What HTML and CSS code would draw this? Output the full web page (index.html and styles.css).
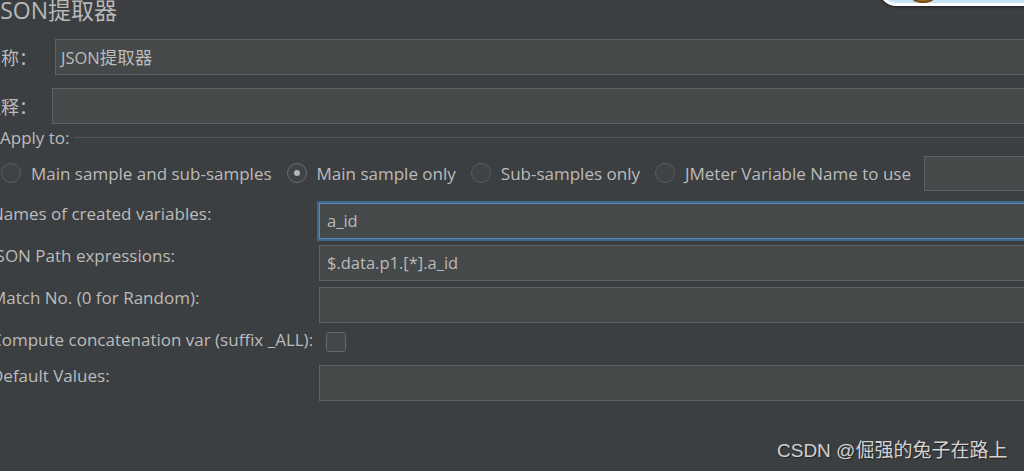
FILE: index.html
```html
<!DOCTYPE html>
<html lang="zh">
<head>
<meta charset="utf-8">
<title>JSON提取器</title>
<link rel="stylesheet" href="styles.css">
</head>
<body>
<div class="page">
  <div class="title">JSON提取器</div>
  <div class="row row-name">
    <span class="lbl lbl-name">名称：</span>
    <div class="field name-field">JSON<span class="cjk">提取器</span></div>
  </div>
  <div class="row row-comment">
    <span class="lbl lbl-comment">注释：</span>
    <div class="field"></div>
  </div>
  <div class="apply">
    <span>Apply to:</span>
    <span class="sep"></span>
  </div>
  <div class="radios">
    <div class="radio"><span class="circle"></span><span>Main sample and sub-samples</span></div>
    <div class="radio"><span class="circle checked"></span><span>Main sample only</span></div>
    <div class="radio"><span class="circle"></span><span>Sub-samples only</span></div>
    <div class="radio"><span class="circle"></span><span>JMeter Variable Name to use</span></div>
    <div class="field var-field"></div>
  </div>
  <div class="grid">
    <span class="glabel">Names of created variables:</span>
    <div class="field focused">a_id</div>
    <span class="glabel">JSON Path expressions:</span>
    <div class="field">$.data.p1.[*].a_id</div>
    <span class="glabel">Match No. (0 for Random):</span>
    <div class="field"></div>
    <span class="glabel">Compute concatenation var (suffix _ALL):</span>
    <div class="checkrow"><span class="checkbox"></span></div>
    <span class="glabel">Default Values:</span>
    <div class="field"></div>
  </div>
</div>
<div class="deco"><span class="blob"></span></div>
<div class="watermark">CSDN @倔强的兔子在路上</div>
</body>
</html>
```
FILE: styles.css
```css
html, body {
  margin: 0;
  padding: 0;
}
body {
  background: #3c3f41;
  width: 1024px;
  height: 471px;
  overflow: hidden;
  position: relative;
  font-family: "Open Sans", "Noto Sans CJK SC", sans-serif;
  color: #bbbbbb;
}
.page {
  width: 1120px;
}
.title {
  font-size: 23px;
  line-height: 28px;
  height: 28px;
  margin: -4px 0 0 -6px;
  color: #b8b8b8;
}
.row {
  display: flex;
  align-items: center;
  height: 36px;
}
.row-name {
  margin-top: 15px;
}
.row-comment {
  margin-top: 13px;
}
.lbl {
  font-family: "Noto Sans CJK TC", "Noto Sans CJK SC", sans-serif;
  font-size: 18px;
  flex: none;
  margin-left: -17px;
}
.lbl-name {
  width: 72px;
}
.lbl-comment {
  width: 69px;
}
.field {
  flex: 1;
  height: 36px;
  box-sizing: border-box;
  background: #45494a;
  border: 1px solid #5f6263;
  font-size: 16.5px;
  line-height: 34px;
  padding: 0 7px;
  white-space: nowrap;
}
.name-field {
  padding-left: 5px;
}
.cjk {
  font-size: 17.5px;
}
.apply {
  display: flex;
  align-items: center;
  height: 22px;
  margin-top: 2px;
  font-size: 17px;
}
.sep {
  flex: 1;
  height: 1px;
  background: #54585a;
  margin-left: 4px;
}
.radios {
  display: flex;
  align-items: center;
  height: 36px;
  margin-top: 7px;
}
.radio {
  display: flex;
  align-items: center;
  margin-right: 14px;
  font-size: 17px;
  white-space: nowrap;
}
.circle {
  width: 20px;
  height: 20px;
  box-sizing: border-box;
  border: 1px solid #5c5f61;
  border-radius: 50%;
  margin: 0 10px 0 1px;
  background: #3f4345;
  position: relative;
}
.circle.checked {
  border-color: #6b6e70;
}
.circle.checked::after {
  content: "";
  position: absolute;
  left: 6px;
  top: 6px;
  width: 6px;
  height: 6px;
  border-radius: 50%;
  background: #b5b5b5;
}
.var-field {
  margin-left: -1px;
  height: 35px;
}
.grid {
  display: grid;
  grid-template-columns: 328px 1fr;
  row-gap: 6px;
  margin-left: -9px;
  margin-top: 12px;
}
.glabel {
  font-size: 17px;
  line-height: 22px;
  align-self: start;
  white-space: nowrap;
}
.focused {
  border-color: #5b87b5;
  box-shadow: 0 0 0 2px #3d6690;
}
.checkrow {
  height: 30px;
}
.checkbox {
  display: block;
  width: 20px;
  height: 20px;
  box-sizing: border-box;
  border: 1px solid #66696b;
  border-radius: 3px;
  background: #43474a;
  margin: 3px 0 0 7px;
}
.deco {
  position: absolute;
  left: 879px;
  top: -28px;
  width: 200px;
  height: 28px;
  background: #c8e3f6;
  border: 3px solid #ffffff;
  border-radius: 20px;
  box-shadow: 0 1px 3px rgba(0, 0, 0, 0.55);
}
.blob {
  position: absolute;
  left: 30px;
  top: 18px;
  width: 22px;
  height: 10px;
  border-radius: 50%;
  background: #b8801f;
  box-shadow: inset 0 -2px 2px #6b4310;
}
.watermark {
  position: absolute;
  left: 777px;
  top: 439px;
  font-family: "Liberation Sans", "Noto Sans CJK SC", sans-serif;
  font-size: 19px;
  line-height: 24px;
  color: #d2d2d2;
  text-shadow: 1px 1px 1px rgba(0, 0, 0, 0.45);
  white-space: nowrap;
}
```
